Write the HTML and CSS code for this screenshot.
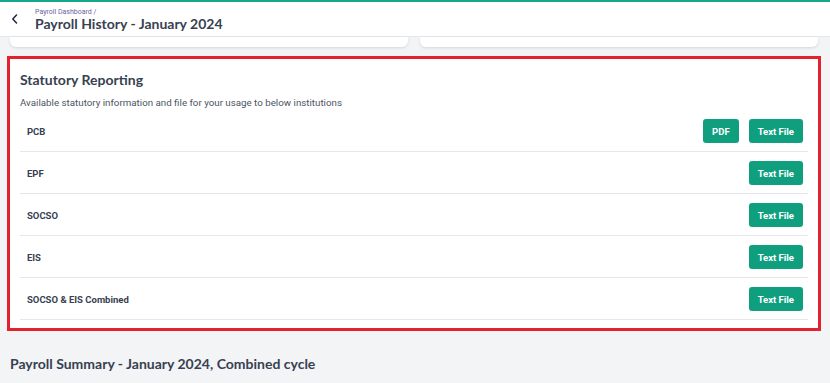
FILE: index.html
```html
<!DOCTYPE html>
<html lang="en">
<head>
    <meta charset="UTF-8">
    <meta name="viewport" content="width=device-width, initial-scale=1.0">
    <title>Payroll History - January 2024</title>
    <link rel="stylesheet" href="styles.css">
</head>
<body>
    <header class="topbar">
        <button class="back" aria-label="Back">
            <svg width="8" height="10" viewBox="0 0 8 10">
                <path d="M5.5 1 L1.8 5 L5.5 9" fill="none" stroke="#1f2937" stroke-width="1.5" stroke-linecap="round" stroke-linejoin="round"/>
            </svg>
        </button>
        <div class="titles">
            <div class="crumb">Payroll Dashboard /</div>
            <h1>Payroll History - January 2024</h1>
        </div>
    </header>

    <main class="page">
        <div class="cards-top">
            <div class="card-stub"></div>
            <div class="card-stub"></div>
        </div>

        <section class="card statutory">
            <h2>Statutory Reporting</h2>
            <p class="subtitle">Available statutory information and file for your usage to below institutions</p>
            <div class="report-list">
                <div class="report-row">
                    <span class="label">PCB</span>
                    <div class="actions">
                        <button class="btn">PDF</button>
                        <button class="btn">Text File</button>
                    </div>
                </div>
                <div class="report-row">
                    <span class="label">EPF</span>
                    <div class="actions">
                        <button class="btn">Text File</button>
                    </div>
                </div>
                <div class="report-row">
                    <span class="label">SOCSO</span>
                    <div class="actions">
                        <button class="btn">Text File</button>
                    </div>
                </div>
                <div class="report-row">
                    <span class="label">EIS</span>
                    <div class="actions">
                        <button class="btn">Text File</button>
                    </div>
                </div>
                <div class="report-row">
                    <span class="label">SOCSO &amp; EIS Combined</span>
                    <div class="actions">
                        <button class="btn">Text File</button>
                    </div>
                </div>
            </div>
        </section>

        <h3 class="summary-title">Payroll Summary - January 2024, Combined cycle</h3>
    </main>
</body>
</html>
```

FILE: styles.css
```css
body, html {
    margin: 0;
    padding: 0;
    font-family: 'Roboto', 'Liberation Sans', sans-serif;
    background-color: #f3f4f6;
    color: #374151;
}

.topbar {
    height: 34px;
    background-color: white;
    border-top: 2px solid #14a88a;
    border-bottom: 1px solid #e5e7eb;
    display: flex;
    align-items: flex-start;
    padding-left: 10px;
}

.back {
    align-self: center;
    width: 10px;
    height: 12px;
    padding: 0;
    border: none;
    background: none;
    display: flex;
    align-items: center;
    justify-content: center;
    margin: 0 15px 0 0;
    cursor: pointer;
}

.titles {
    display: flex;
    flex-direction: column;
    margin-top: 7px;
}

.crumb {
    font-size: 7px;
    line-height: 6px;
    color: #6e63a3;
}

h1 {
    margin: 0;
    font-family: 'Lato', sans-serif;
    font-weight: 700;
    font-size: 14px;
    line-height: 17px;
    color: #374151;
}

.page {
    padding: 0 12px 0 10px;
}

.cards-top {
    display: grid;
    grid-template-columns: 1fr 1fr;
    gap: 12px;
}

.card-stub {
    height: 10px;
    background-color: white;
    border-radius: 0 0 6px 6px;
    box-shadow: 0 1px 3px rgba(0, 0, 0, 0.12);
}

.card {
    background-color: white;
    margin-top: 12px;
    padding: 11px 10px 8px;
}

.statutory {
    outline: 3px solid #e3222f;
}

h2 {
    margin: 0 0 6px;
    font-family: 'Lato', sans-serif;
    font-weight: 700;
    font-size: 14px;
    line-height: 20px;
    color: #374151;
}

.subtitle {
    margin: 0;
    font-size: 9.75px;
    line-height: 14px;
    color: #4b5563;
}

.report-row {
    display: flex;
    align-items: center;
    justify-content: space-between;
    padding: 9px 5px 8px 7px;
    border-bottom: 1px solid #e5e7eb;
}

.label {
    font-size: 9.5px;
    font-weight: 700;
    color: #374151;
}

.actions {
    display: flex;
    gap: 10px;
}

.btn {
    height: 24px;
    padding: 0 9px;
    border: none;
    border-radius: 3px;
    background-color: #0f9f7e;
    color: white;
    font-family: 'Roboto', sans-serif;
    font-weight: 700;
    font-size: 9.5px;
    cursor: pointer;
}

.summary-title {
    margin: 26px 0 0;
    font-family: 'Lato', sans-serif;
    font-weight: 700;
    font-size: 14px;
    line-height: 20px;
    color: #374151;
}
```
